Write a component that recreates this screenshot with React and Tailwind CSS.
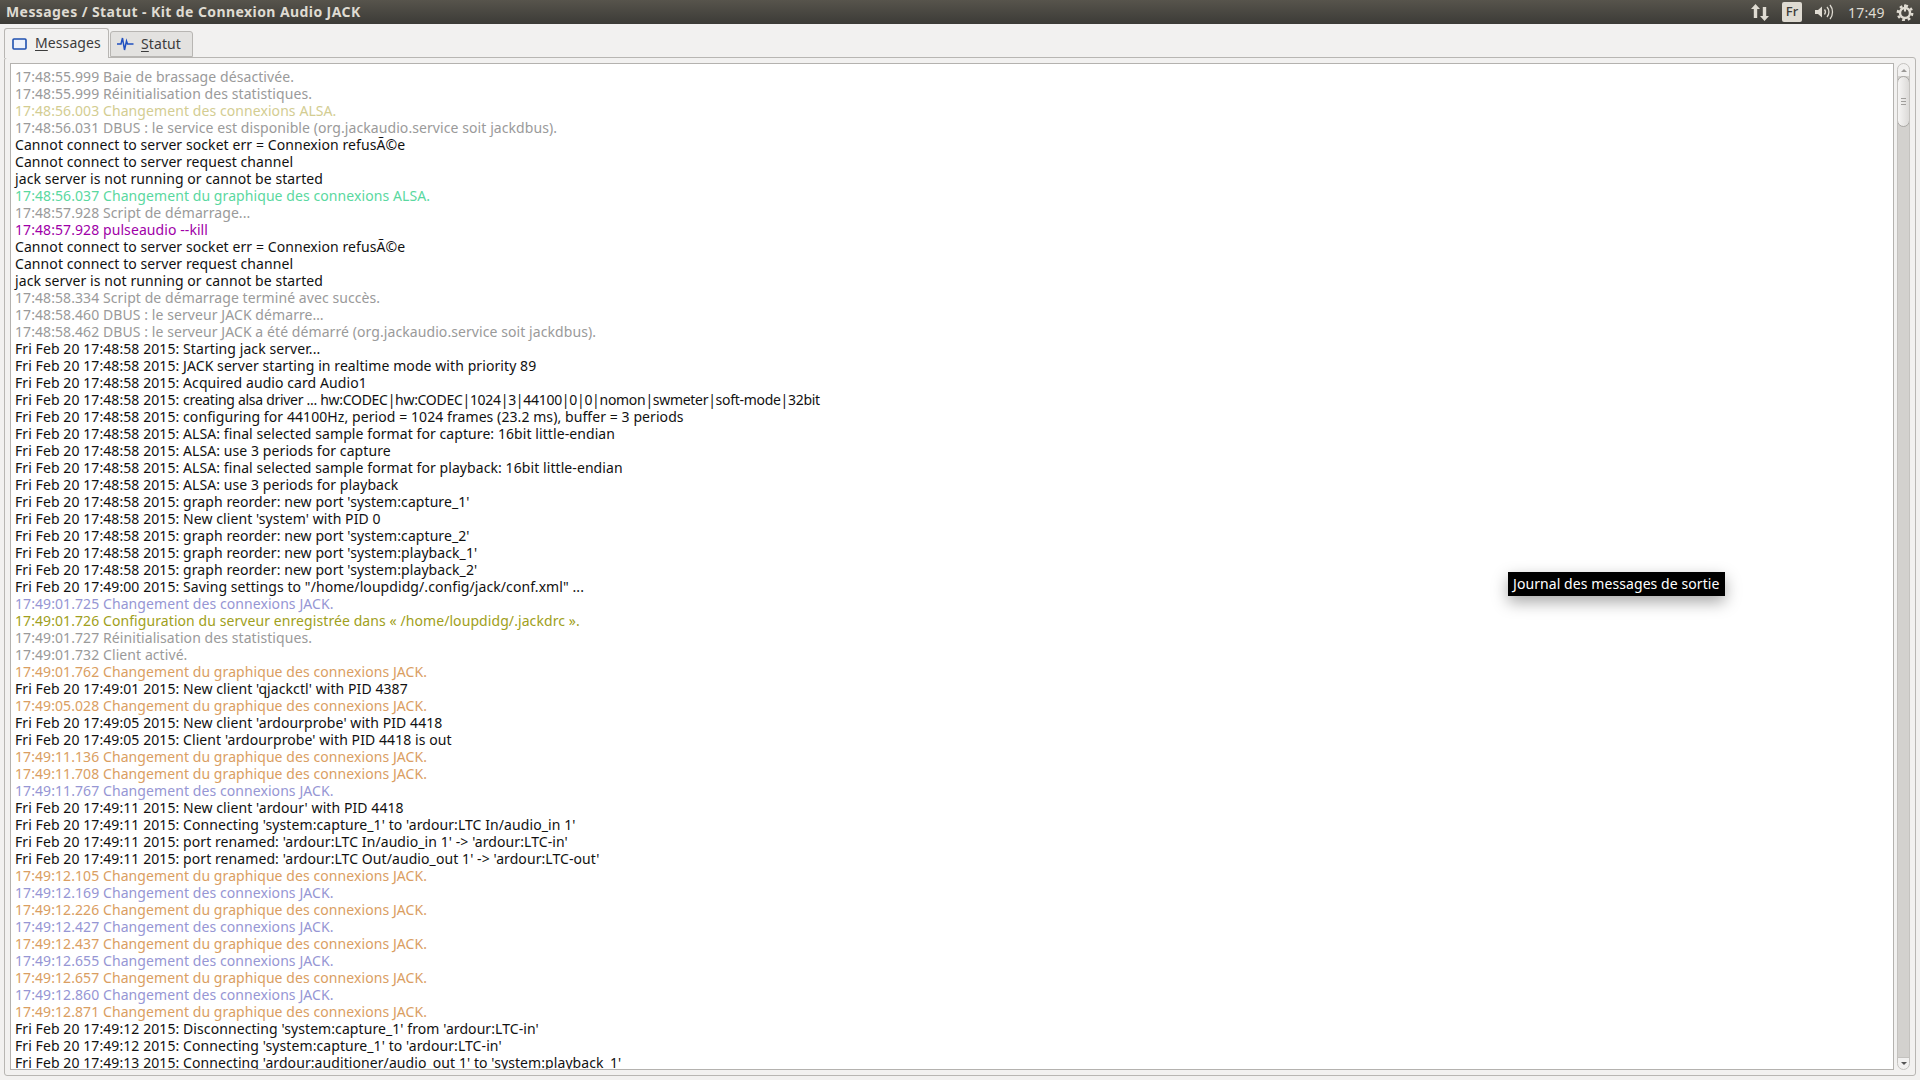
const G="text-[#9a9a9a]",Y="text-[#d3cd92]",B="text-[#111]",T="text-[#5ad8a0]",P="text-[#a000a8]",J="text-[#9696d4]",O="text-[#da9e62]",L="text-[#a0a020]";
const lines=[
[G,"17:48:55.999 Baie de brassage désactivée."],
[G,"17:48:55.999 Réinitialisation des statistiques."],
[Y,"17:48:56.003 Changement des connexions ALSA."],
[G,"17:48:56.031 DBUS : le service est disponible (org.jackaudio.service soit jackdbus)."],
[B,"Cannot connect to server socket err = Connexion refusÃ©e"],
[B,"Cannot connect to server request channel"],
[B,"jack server is not running or cannot be started"],
[T,"17:48:56.037 Changement du graphique des connexions ALSA."],
[G,"17:48:57.928 Script de démarrage..."],
[P,"17:48:57.928 pulseaudio --kill"],
[B,"Cannot connect to server socket err = Connexion refusÃ©e"],
[B,"Cannot connect to server request channel"],
[B,"jack server is not running or cannot be started"],
[G,"17:48:58.334 Script de démarrage terminé avec succès."],
[G,"17:48:58.460 DBUS : le serveur JACK démarre…"],
[G,"17:48:58.462 DBUS : le serveur JACK a été démarré (org.jackaudio.service soit jackdbus)."],
[B,"Fri Feb 20 17:48:58 2015: Starting jack server..."],
[B,"Fri Feb 20 17:48:58 2015: JACK server starting in realtime mode with priority 89"],
[B,"Fri Feb 20 17:48:58 2015: Acquired audio card Audio1"],
[B,"Fri Feb 20 17:48:58 2015: ","creating alsa driver ... hw:CODEC|hw:CODEC|1024|3|44100|0|0|nomon|swmeter|soft-mode|32bit"],
[B,"Fri Feb 20 17:48:58 2015: configuring for 44100Hz, period = 1024 frames (23.2 ms), buffer = 3 periods"],
[B,"Fri Feb 20 17:48:58 2015: ALSA: final selected sample format for capture: 16bit little-endian"],
[B,"Fri Feb 20 17:48:58 2015: ALSA: use 3 periods for capture"],
[B,"Fri Feb 20 17:48:58 2015: ALSA: final selected sample format for playback: 16bit little-endian"],
[B,"Fri Feb 20 17:48:58 2015: ALSA: use 3 periods for playback"],
[B,"Fri Feb 20 17:48:58 2015: graph reorder: new port 'system:capture_1'"],
[B,"Fri Feb 20 17:48:58 2015: New client 'system' with PID 0"],
[B,"Fri Feb 20 17:48:58 2015: graph reorder: new port 'system:capture_2'"],
[B,"Fri Feb 20 17:48:58 2015: graph reorder: new port 'system:playback_1'"],
[B,"Fri Feb 20 17:48:58 2015: graph reorder: new port 'system:playback_2'"],
[B,"Fri Feb 20 17:49:00 2015: Saving settings to \"/home/loupdidg/.config/jack/conf.xml\" ..."],
[J,"17:49:01.725 Changement des connexions JACK."],
[L,"17:49:01.726 Configuration du serveur enregistrée dans « /home/loupdidg/.jackdrc »."],
[G,"17:49:01.727 Réinitialisation des statistiques."],
[G,"17:49:01.732 Client activé."],
[O,"17:49:01.762 Changement du graphique des connexions JACK."],
[B,"Fri Feb 20 17:49:01 2015: New client 'qjackctl' with PID 4387"],
[O,"17:49:05.028 Changement du graphique des connexions JACK."],
[B,"Fri Feb 20 17:49:05 2015: New client 'ardourprobe' with PID 4418"],
[B,"Fri Feb 20 17:49:05 2015: Client 'ardourprobe' with PID 4418 is out"],
[O,"17:49:11.136 Changement du graphique des connexions JACK."],
[O,"17:49:11.708 Changement du graphique des connexions JACK."],
[J,"17:49:11.767 Changement des connexions JACK."],
[B,"Fri Feb 20 17:49:11 2015: New client 'ardour' with PID 4418"],
[B,"Fri Feb 20 17:49:11 2015: Connecting 'system:capture_1' to 'ardour:LTC In/audio_in 1'"],
[B,"Fri Feb 20 17:49:11 2015: port renamed: 'ardour:LTC In/audio_in 1' -> 'ardour:LTC-in'"],
[B,"Fri Feb 20 17:49:11 2015: port renamed: 'ardour:LTC Out/audio_out 1' -> 'ardour:LTC-out'"],
[O,"17:49:12.105 Changement du graphique des connexions JACK."],
[J,"17:49:12.169 Changement des connexions JACK."],
[O,"17:49:12.226 Changement du graphique des connexions JACK."],
[J,"17:49:12.427 Changement des connexions JACK."],
[O,"17:49:12.437 Changement du graphique des connexions JACK."],
[J,"17:49:12.655 Changement des connexions JACK."],
[O,"17:49:12.657 Changement du graphique des connexions JACK."],
[J,"17:49:12.860 Changement des connexions JACK."],
[O,"17:49:12.871 Changement du graphique des connexions JACK."],
[B,"Fri Feb 20 17:49:12 2015: Disconnecting 'system:capture_1' from 'ardour:LTC-in'"],
[B,"Fri Feb 20 17:49:12 2015: Connecting 'system:capture_1' to 'ardour:LTC-in'"],
[B,"Fri Feb 20 17:49:13 2015: Connecting 'ardour:auditioner/audio_out 1' to 'system:playback_1'"],
];
export default function App(){return(
<div className="w-[1920px] h-[1080px] overflow-hidden relative flex flex-col bg-[#f2f1f0] font-['Noto_Sans',sans-serif]">
 <div className="h-6 shrink-0 flex items-center bg-gradient-to-b from-[#57544c] to-[#3c3b37] text-[#dfdbd2] pl-[6px] pr-[6px] gap-[13px]">
  <span className="text-[14px] font-bold tracking-[0.42px] leading-6 flex-1">Messages / Statut - Kit de Connexion Audio JACK</span>
  <svg width="18" height="18" viewBox="0 0 18 18" fill="#dfdbd2"><path d="M4.5 1 L9 6 H6.2 V15 H2.8 V6 H0z"/><path d="M13.5 18 L18 13 H15.2 V4 H11.8 V13 H9z"/></svg>
  <div className="w-5 h-5 rounded-[2px] bg-[#dfdbd2] text-[#3c3b37] text-[13px] font-medium flex items-center justify-center">Fr</div>
  <svg width="20" height="18" viewBox="0 0 20 18" fill="none" stroke="#dfdbd2"><path d="M0 7h3l4-3.5v11L3 11H0z" fill="#dfdbd2" stroke="none"/><path d="M9.5 6.5a4 4 0 0 1 0 5M12 4a7.5 7.5 0 0 1 0 10M15 2a11 11 0 0 1 0 14" strokeWidth="1.3"/></svg>
  <span className="text-[14px] text-[#dfdbd2] w-[35px] tracking-[0.2px] whitespace-nowrap">17:49</span>
  <svg width="18" height="18" viewBox="0 0 18 18" fill="none" stroke="#dfdbd2"><circle cx="9" cy="10" r="5" strokeWidth="2.4"/><circle cx="9" cy="10" r="7.2" strokeWidth="2.4" strokeDasharray="2.8 2.85"/><path d="M9 1.5v7" strokeWidth="2"/></svg>
 </div>
 <div className="flex-1 min-h-0 flex flex-col px-[4px] pt-1 pb-[4px]">
  <div className="flex items-end h-[29px] relative z-10 text-[14px] text-[#3c3c3c] tracking-[0.1px]">
   <div className="h-[30px] w-[105px] flex items-center pl-[7px] gap-[8px] bg-[#f2f1f0] border border-b-0 border-[#b8b6b3] rounded-t-[3px] -mb-[1px]">
    <svg width="15" height="12" viewBox="0 0 15 12" fill="none"><rect x="1" y="1" width="13" height="10" rx="1" stroke="#1f50b0" strokeWidth="1.6" fill="#eef2fa"/></svg>
    <span className="-mt-[2px]"><u className="underline-offset-2">M</u>essages</span>
   </div>
   <div className="h-[26px] w-[83px] ml-[1px] flex items-center pl-[6px] gap-[7px] bg-[#e3e2e0] border border-[#b8b6b3] rounded-t-[3px]">
    <svg width="17" height="16" viewBox="0 0 17 16" fill="none" stroke="#2050c0" strokeWidth="1.5"><path d="M0 8h4l1.5-6 2 12 2-9 1 3h6"/></svg>
    <span className="-mt-[1px]"><u className="underline-offset-2">S</u>tatut</span>
   </div>
  </div>
  <div className="flex-1 min-h-0 border border-[#b8b6b3] rounded-[3px] bg-[#f2f1f0] pl-[5px] pr-[5px] pt-[5px] pb-[5px] flex gap-[3px]">
   <div className="flex-1 min-w-0 bg-white border border-[#b4b2af] pl-[4px] pt-[4px] overflow-hidden text-[14px] leading-[17px] whitespace-pre tracking-[0.08px]">
    {lines.map(([c,t,r],i)=><div key={i} className={c}>{t}{r&&<span className="tracking-[-0.295px]">{r}</span>}</div>)}
   </div>
   <div className="w-[13px] shrink-0 flex flex-col border border-[#c4c2bf] rounded-full bg-[#f2f1f0] relative overflow-hidden">
    <div className="h-[12px] shrink-0 flex items-center justify-center"><div className="border-x-[3px] border-x-transparent border-b-[3px] border-b-[#9a9895]"></div></div>
    <div className="flex-1 bg-[#d3d1ce] flex flex-col">
     <div className="h-[51px] -mx-px rounded-full border border-[#a9a7a4] bg-gradient-to-r from-[#f6f5f4] to-[#dcdad8] flex flex-col items-center justify-center gap-[2px]"><i className="block w-[5px] h-px bg-[#a09e9b]"></i><i className="block w-[5px] h-px bg-[#a09e9b]"></i><i className="block w-[5px] h-px bg-[#a09e9b]"></i></div>
    </div>
    <div className="h-[12px] shrink-0 flex items-center justify-center border-t border-[#c4c2bf]"><div className="border-x-[3px] border-x-transparent border-t-[3px] border-t-[#555]"></div></div>
   </div>
  </div>
 </div>
 <div className="absolute left-[1508px] top-[572px] h-6 w-[217px] bg-black text-white text-[14px] flex items-center pl-[5px] pb-[2px] tracking-[0.08px] shadow-[0_6px_16px_rgba(0,0,0,0.35)]">Journal des messages de sortie</div>
</div>)}
